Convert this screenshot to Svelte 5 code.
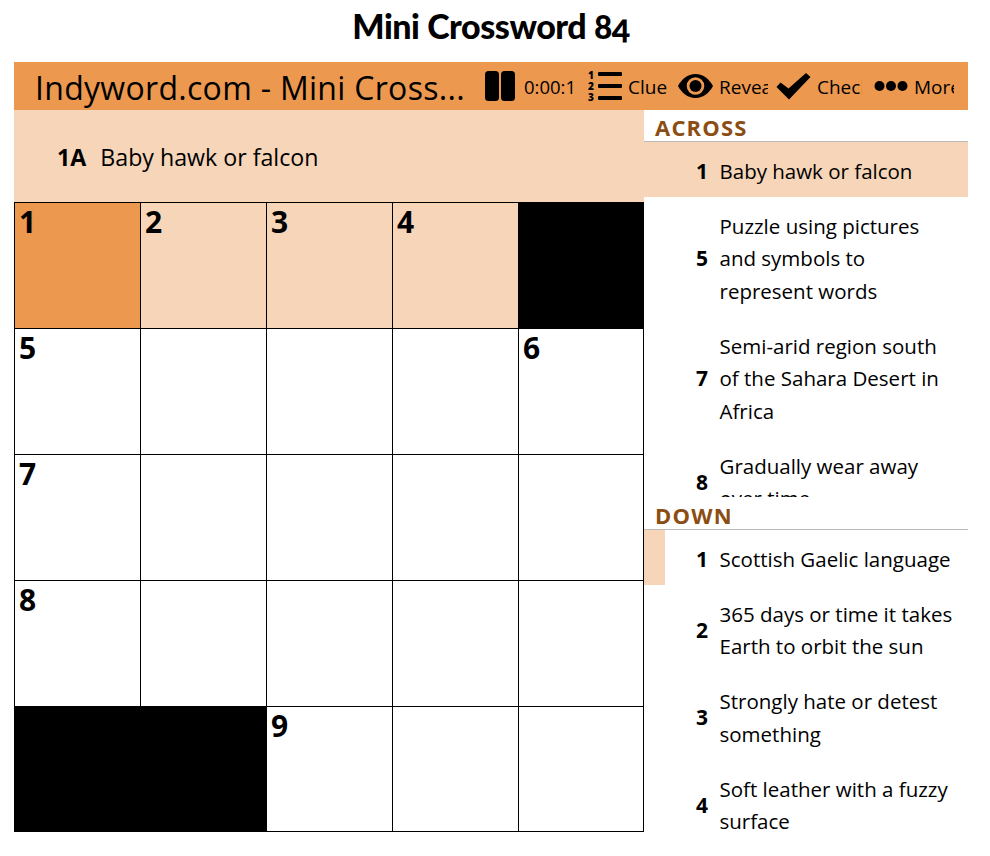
<script>
  const blocks = [4, 20, 21];
  const numbers = { 0: 1, 1: 2, 2: 3, 3: 4, 5: 5, 9: 6, 10: 7, 15: 8, 22: 9 };
  const cells = Array.from({ length: 25 }, (_, i) => i);

  const across = [
    { n: 1, text: 'Baby hawk or falcon', active: true },
    { n: 5, text: 'Puzzle using pictures and symbols to represent words' },
    { n: 7, text: 'Semi-arid region south of the Sahara Desert in Africa' },
    { n: 8, text: 'Gradually wear away over time' },
    { n: 9, text: 'Small Asian deer' }
  ];
  const down = [
    { n: 1, text: 'Scottish Gaelic language', cross: true },
    { n: 2, text: '365 days or time it takes Earth to orbit the sun' },
    { n: 3, text: 'Strongly hate or detest something' },
    { n: 4, text: 'Soft leather with a fuzzy surface' }
  ];

  function cellClass(i) {
    if (blocks.includes(i)) return 'cell block';
    if (i === 0) return 'cell current';
    if (i < 4) return 'cell word';
    return 'cell';
  }
</script>

<div class="page">
  <h1>Mini Crossword 84</h1>

  <div class="puzzle">
    <div class="toolbar">
      <div class="name">Indyword.com - Mini Cross...</div>
      <div class="tool pause">
        <svg width="30" height="30" viewBox="0 0 30 30"><rect x="0" y="0" width="14" height="30" rx="3.5" /><rect x="16" y="0" width="14" height="30" rx="3.5" /></svg>
        <span class="label timer">0:00:1</span>
      </div>
      <div class="tool clues">
        <svg width="35" height="32" viewBox="0 0 35 32">
          <rect x="11" y="2" width="24" height="4" rx="1" /><rect x="11" y="14" width="24" height="4" rx="1" /><rect x="11" y="26" width="24" height="4" rx="1" />
          <text x="1" y="9" class="mini">1</text><text x="1" y="20" class="mini">2</text><text x="1" y="31" class="mini">3</text>
        </svg>
        <span class="label w40">Clue</span>
      </div>
      <div class="tool reveal">
        <svg width="35" height="24" viewBox="0 0 35 24"><path fill-rule="evenodd" d="M17.5 0C9.5 0 3.5 5.5 0 12c3.5 6.500 9.500 12 17.500 12S31.500 18.500 35 12C31.500 5.500 25.500 0 17.500 0zM17.500 3.200a8.800 8.800 0 1 1 0 17.600a8.800 8.800 0 0 1 0-17.600z" /><circle cx="17.500" cy="12" r="6" /></svg>
        <span class="label w49">Reveal</span>
      </div>
      <div class="tool check">
        <svg width="35" height="28" viewBox="0 0 35 28"><path d="M0.500 15l4-4.500 8 6L30 1l4.500 4L13 27.500z" /></svg>
        <span class="label w45">Check</span>
      </div>
      <div class="tool more">
        <svg width="34" height="12" viewBox="0 0 34 12"><circle cx="5.500" cy="6" r="5" /><circle cx="17" cy="6" r="5" /><circle cx="28.500" cy="6" r="5" /></svg>
        <span class="label w40">More</span>
      </div>
    </div>

    <div class="body">
      <div class="left">
        <div class="current-clue">
          <span class="clue-num">1A</span>
          <span>Baby hawk or falcon</span>
        </div>
        <div class="grid">
          {#each cells as i}
            <div class={cellClass(i)}>
              {#if numbers[i]}<span class="num">{numbers[i]}</span>{/if}
            </div>
          {/each}
        </div>
      </div>

      <div class="side">
        <div class="section-title first">ACROSS</div>
        <div class="list across">
          {#each across as c}
            <div class="item" class:active={c.active}>
              <span class="n">{c.n}</span>
              <span class="t">{c.text}</span>
            </div>
          {/each}
        </div>
        <div class="section-title">DOWN</div>
        <div class="list down">
          {#each down as c}
            <div class="item" class:cross={c.cross}>
              <span class="n">{c.n}</span>
              <span class="t">{c.text}</span>
            </div>
          {/each}
        </div>
      </div>
    </div>
  </div>
</div>

<style>
  :global(body) {
    margin: 0;
    background: #fff;
    color: #000;
    font-family: "Open Sans", "Noto Sans", sans-serif;
  }

  .page {
    width: 990px;
    height: 856px;
    overflow: hidden;
  }

  h1 {
    width: 982px;
    margin: 0;
    height: 62px;
    padding-top: 6px;
    box-sizing: border-box;
    text-align: center;
    font-family: Lato, sans-serif;
    font-size: 34px;
    line-height: 40px;
    font-weight: 900;
    letter-spacing: -0.45px;
    font-variant-numeric: oldstyle-nums;
  }

  .puzzle {
    width: 954px;
    margin-left: 14px;
  }

  .toolbar {
    height: 48px;
    background: #ec984f;
    display: flex;
    align-items: center;
    overflow: hidden;
  }

  .name {
    width: 469px;
    height: 48px;
    box-sizing: border-box;
    padding: 2px 0 0 21px;
    font-size: 32px;
    line-height: 48px;
    white-space: nowrap;
    flex: none;
    letter-spacing: 0.3px;
    overflow: hidden;
  }

  .tool {
    display: flex;
    align-items: center;
    flex: none;
  }

  .tool svg {
    display: block;
    flex: none;
  }

  .pause { margin-left: 2px; width: 102px; gap: 9px; }
  .clues { width: 91px; gap: 6px; }
  .reveal { width: 98px; gap: 6px; }
  .check { width: 98px; gap: 6px; }
  .more { gap: 6px; }

  .label {
    font-size: 19px;
    line-height: 50px;
    height: 48px;
    white-space: nowrap;
    overflow: hidden;
    display: block;
  }

  .timer { font-size: 18.5px; width: 53px; }
  .w40 { width: 40px; }
  .w49 { width: 49px; }
  .w45 { width: 45px; }

  .mini {
    font-family: "Open Sans", sans-serif;
    font-size: 10px;
    font-weight: 800;
  }

  .body {
    display: flex;
  }

  .left {
    width: 630px;
    flex: none;
  }

  .current-clue {
    height: 92px;
    box-sizing: border-box;
    background: #f6d5b8;
    padding: 30px 0 0 43px;
    font-size: 23.2px;
    line-height: 34px;
    display: flex;
    gap: 14px;
    white-space: nowrap;
  }

  .clue-num {
    font-weight: 700;
  }

  .grid {
    width: 630px;
    height: 630px;
    display: grid;
    grid-template-columns: repeat(5, 126px);
    grid-template-rows: repeat(5, 126px);
  }

  .cell {
    box-sizing: border-box;
    border: 1px solid #000;
    margin: 0 -1px -1px 0;
    padding: 0 0 0 4px;
    background: #fff;
  }

  .cell:nth-child(5n) { margin-right: 0; }
  .cell:nth-child(n + 21) { margin-bottom: 0; }

  .word { background: #f6d5b8; }
  .current { background: #ec984f; }
  .block { background: #000; }

  .num {
    display: block;
    font-size: 30px;
    line-height: 37px;
    font-weight: 700;
  }

  .side {
    width: 324px;
    flex: none;
  }

  .section-title {
    height: 25px;
    padding: 0 0 0 11px;
    border-bottom: 1px solid #bbb;
    color: #8b4d14;
    font-size: 22px;
    line-height: 23px;
    font-weight: 700;
    letter-spacing: 1.2px;
  }

  .section-title.first {
    height: 31px;
    line-height: 34px;
  }

  .list {
    overflow: hidden;
  }

  .across { height: 355px; margin-bottom: 7px; }
  .down { height: 326px; }

  .item {
    display: flex;
    align-items: center;
    padding: 12.5px 10px 10px 0;
    font-size: 20.5px;
    line-height: 32.5px;
  }

  .item.active { background: #f6d5b8; }

  .item.cross {
    background: linear-gradient(to right, #f6d5b8 21px, #fff 21px);
  }

  .n {
    width: 64px;
    flex: none;
    text-align: right;
    font-weight: 700;
    font-size: 21px;
  }

  .t {
    margin-left: 11.5px;
  }
</style>
